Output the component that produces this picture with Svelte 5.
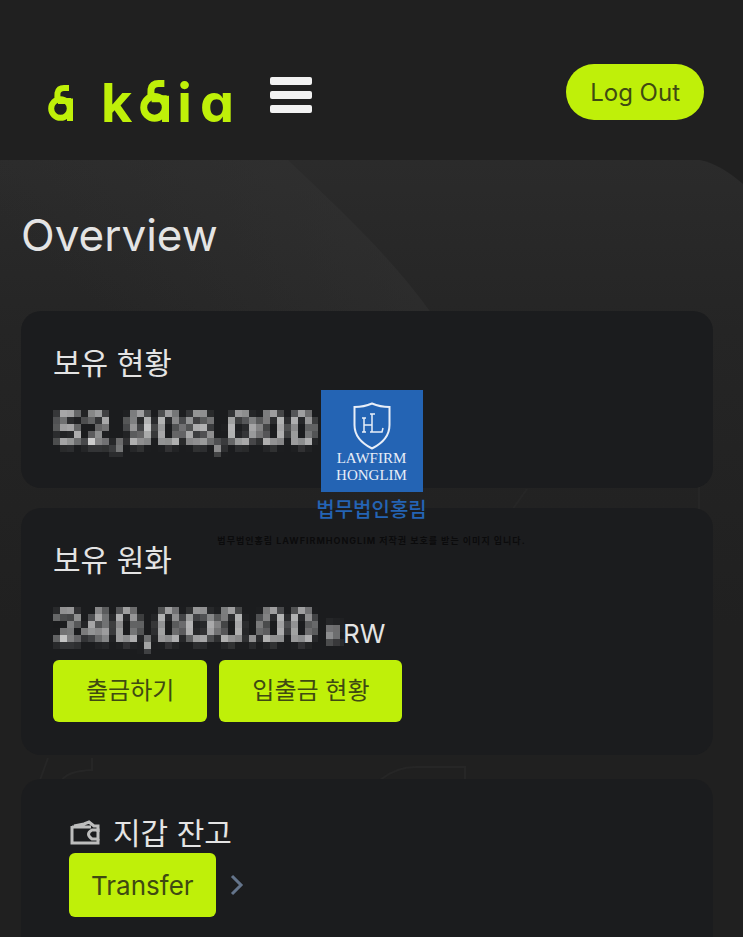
<script lang="ts">
  interface Balance {
    title: string;
    amount: string;
    unit: string;
    actions: string[];
  }

  let balances: Balance[] = [
    { title: '보유 현황', amount: '52,908,000', unit: '', actions: [] },
    { title: '보유 원화', amount: '240,000.00', unit: 'KRW', actions: ['출금하기', '입출금 현황'] }
  ];
</script>

{#snippet mark()}
  <svg class="mark" viewBox="0 0 25 36" aria-hidden="true">
    <circle cx="12.5" cy="23.5" r="9.300" />
    <path d="M22 13.500V36M23 16H10M21 3H16Q10.500 3 9.500 8Q9 12 10 16" />
  </svg>
{/snippet}

<div class="page">
  <header class="header">
    <a class="brand" href="/" aria-label="kaia">
      <span class="symbol">{@render mark()}</span>
      <span class="wordmark">
        <span>k</span>
        {@render mark()}
        <span>i</span>
        <span>a</span>
      </span>
    </a>
    <button class="menu-btn" aria-label="Menu">
      <span></span>
      <span></span>
      <span></span>
    </button>
    <button class="logout-btn">Log Out</button>
  </header>

  <main class="main">
    <svg class="backdrop" viewBox="0 0 743 777" preserveAspectRatio="xMidYMin slice" aria-hidden="true">
      <defs>
        <linearGradient id="panel" x1="0" y1="0" x2="0" y2="1">
          <stop offset="0" stop-color="#2b2b2b" />
          <stop offset="0.22" stop-color="#252525" />
          <stop offset="0.6" stop-color="#202020" />
        </linearGradient>
        <linearGradient id="sheen" x1="0" y1="0.4" x2="1" y2="0">
          <stop offset="0" stop-color="#333" stop-opacity="0" />
          <stop offset="1" stop-color="#333" stop-opacity="0.7" />
        </linearGradient>
      </defs>
      <path d="M0 0H700Q720 4 743 24V777H0Z" fill="url(#panel)" />
      <path d="M0 0H288C335 45 390 95 432 154H0Z" fill="url(#sheen)" />
      <g fill="none" stroke="#262626" stroke-width="2">
        <path d="M512 350L527 329M699 326V350" />
        <path d="M380 620Q396 607 416 607H465V622M40 620L48 598M62 620Q68 611 92 610V598" />
      </g>
    </svg>

    <h1>Overview</h1>

    {#each balances as balance}
      <section class="card">
        <h2>{balance.title}</h2>
        <p class="amount">
          <span class="mosaic">{balance.amount}</span>
          {#if balance.unit}
            <span class="unit"><span class="mosaic">{balance.unit[0]}</span>{balance.unit.slice(1)}</span>
          {/if}
        </p>
        {#if balance.actions.length > 0}
          <div class="actions">
            {#each balance.actions as action}
              <button class="action-btn">{action}</button>
            {/each}
          </div>
        {/if}
      </section>
    {/each}

    <section class="card wallet">
      <h2>
        <svg class="wallet-icon" viewBox="0 0 32 28" aria-hidden="true">
          <path d="M3 7V24H29V20M3 8H22M5 7L15 5L20 3L25 7H29V13" />
          <path d="M29 11H23Q16 15 23 20H29Z" />
        </svg>
        지갑 잔고
      </h2>
      <div class="transfer-row">
        <button class="transfer-btn">Transfer</button>
        <svg class="chevron" viewBox="0 0 14 22" aria-hidden="true">
          <path d="M2 2L11 11L2 20" />
        </svg>
      </div>
    </section>
  </main>

  <div class="watermark">
    <div class="firm-logo">
      <svg class="shield" viewBox="0 0 38 48" aria-hidden="true">
        <path d="M19 1.5Q27 5 36.500 5V23C36.500 34 28 42 19 46.500C10 42 1.500 34 1.500 23V5Q11 5 19 1.500Z" />
        <path class="monogram" d="M11 16V30M9 16H13M9 30H13M11 23H19M19 12V30M17 12H22M17 30H29L30 26" />
      </svg>
      <span>LAWFIRM</span>
      <span>HONGLIM</span>
    </div>
    <p class="firm-name">법무법인홍림</p>
    <p class="notice">법무법인홍림 LAWFIRMHONGLIM 저작권 보호를 받는 이미지 입니다.</p>
  </div>

  <!-- hides the amounts behind 7px blocks -->
  <svg class="filters" width="0" height="0" aria-hidden="true">
    <filter id="mosaic" x="0" y="0" width="100%" height="100%" color-interpolation-filters="sRGB">
      <feGaussianBlur in="SourceGraphic" stdDeviation="2" result="soft" />
      <feFlood x="3" y="3" width="1" height="1" flood-color="#000" result="point" />
      <feOffset in="point" x="0" y="0" width="7" height="7" />
      <feTile result="grid" />
      <feComposite in="soft" in2="grid" operator="in" />
      <feMorphology operator="dilate" radius="3" />
    </filter>
  </svg>
</div>

<style>
  :global(body) {
    margin: 0;
    background: #202020;
  }

  .page {
    position: relative;
    min-height: 100vh;
    overflow: hidden;
    display: flex;
    flex-direction: column;
    background: #202020;
    color: #e4e4e4;
    font-family: Inter, 'Noto Sans CJK KR', sans-serif;
  }

  h1,
  h2,
  p {
    margin: 0;
    font-weight: 400;
  }

  button {
    border: none;
    font-family: inherit;
    cursor: pointer;
  }

  .header {
    display: flex;
    align-items: center;
    height: 160px;
    padding: 24px 39px 0 48px;
    box-sizing: border-box;
  }

  .brand {
    display: flex;
    align-items: center;
    gap: 28px;
    padding-top: 22px;
    color: #bff009;
    text-decoration: none;
  }

  .mark {
    display: block;
    width: 29px;
    height: 42px;
    fill: none;
    stroke: currentColor;
    stroke-width: 6;
  }

  .symbol .mark {
    width: 25px;
    height: 36px;
  }

  .wordmark {
    display: flex;
    align-items: baseline;
    gap: 8px;
    font-size: 54px;
    line-height: 56px;
    font-weight: 700;
    font-feature-settings: 'cv11';
  }

  .menu-btn {
    display: flex;
    flex-direction: column;
    gap: 6px;
    margin-left: 36px;
    padding: 6px 0 0;
    background: transparent;
  }

  .menu-btn span {
    width: 42px;
    height: 8px;
    border-radius: 2px;
    background: #f2f2f2;
  }

  .logout-btn {
    height: 56px;
    margin-left: auto;
    padding: 0 24px;
    border-radius: 28px;
    background: #bff009;
    color: #3f4a12;
    font-size: 24px;
  }

  .main {
    position: relative;
    flex: 1;
    display: flex;
    flex-direction: column;
    gap: 20px;
    padding: 48px 30px 0 21px;
  }

  .backdrop {
    position: absolute;
    inset: 0;
    width: 100%;
    height: 100%;
  }

  h1 {
    position: relative;
    margin-bottom: 28px;
    font-size: 44px;
    line-height: 55px;
  }

  .card {
    position: relative;
    padding: 32px 32px 33px;
    border-radius: 20px;
    background: #1b1c1e;
  }

  h2 {
    font-size: 30px;
    line-height: 40px;
  }

  .amount {
    display: flex;
    align-items: baseline;
    gap: 8px;
    margin-top: 20px;
    font-size: 47px;
    line-height: 52px;
    font-weight: 500;
  }

  .amount .mosaic {
    filter: url(#mosaic);
  }

  .unit {
    display: flex;
    font-size: 26px;
    line-height: 32px;
    font-weight: 400;
  }

  .actions {
    display: flex;
    gap: 12px;
    margin-top: 8px;
  }

  .action-btn,
  .transfer-btn {
    height: 62px;
    border-radius: 6px;
    background: #bff009;
    color: #3f4a12;
    font-size: 24px;
  }

  .action-btn {
    padding: 0 33px 6px;
  }

  .wallet {
    flex: 1;
    margin-top: 4px;
    padding: 34px 48px 20px;
    border-radius: 20px 20px 0 0;
  }

  .wallet h2 {
    display: flex;
    align-items: center;
    gap: 12px;
  }

  .wallet-icon {
    width: 32px;
    height: 28px;
    fill: none;
    stroke: #bdbdbd;
    stroke-width: 3;
  }

  .transfer-row {
    display: flex;
    align-items: center;
    gap: 14px;
  }

  .transfer-btn {
    height: 64px;
    padding: 0 22px;
    font-size: 26px;
  }

  .chevron {
    width: 14px;
    height: 22px;
    fill: none;
    stroke: #64748b;
    stroke-width: 3;
  }

  .watermark {
    position: absolute;
    top: 390px;
    left: 0;
    right: 0;
    display: flex;
    flex-direction: column;
    align-items: center;
    pointer-events: none;
  }

  .firm-logo {
    display: flex;
    flex-direction: column;
    align-items: center;
    width: 102px;
    height: 102px;
    padding-top: 12px;
    box-sizing: border-box;
    background: #2464b4;
    color: #e8eef8;
    font-family: 'Liberation Serif', serif;
    font-size: 15px;
    line-height: 17px;
  }

  .shield {
    width: 38px;
    height: 48px;
    fill: none;
    stroke: currentColor;
    stroke-width: 2;
  }

  .monogram {
    stroke-width: 1.5;
  }

  .firm-name {
    color: #2464b4;
    font-size: 20px;
    line-height: 36px;
    font-weight: 500;
  }

  .notice {
    color: #0b0b0c;
    font-size: 9px;
    line-height: 26px;
    letter-spacing: 1px;
    font-weight: 700;
    white-space: nowrap;
  }

  .filters {
    position: absolute;
  }
</style>
